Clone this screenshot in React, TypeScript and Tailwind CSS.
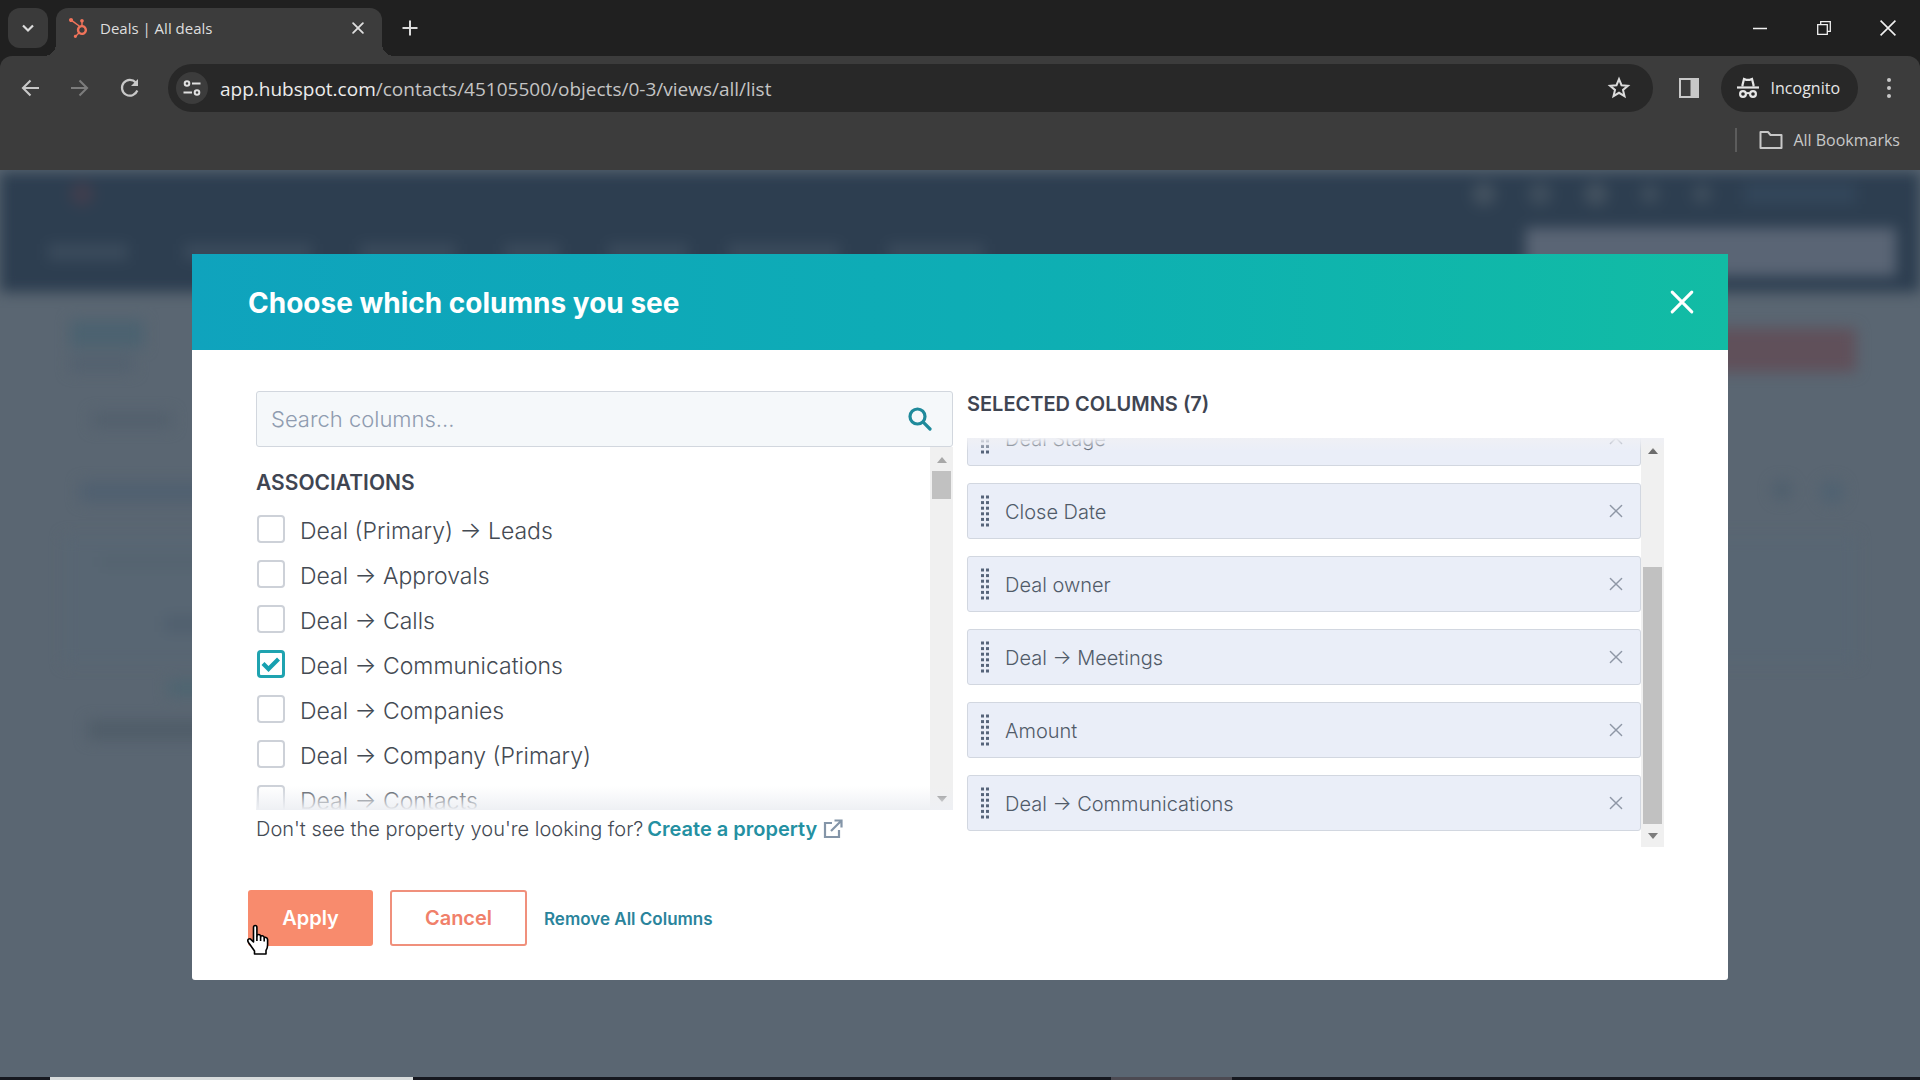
import { useState } from "react";
import { FaHubspot } from "react-icons/fa";

const ASSOCIATIONS = [
  "Deal (Primary) → Leads",
  "Deal → Approvals",
  "Deal → Calls",
  "Deal → Communications",
  "Deal → Companies",
  "Deal → Company (Primary)",
  "Deal → Contacts",
];

const SELECTED = [
  "Deal Stage",
  "Close Date",
  "Deal owner",
  "Deal → Meetings",
  "Amount",
  "Deal → Communications",
];

function Cross({ className, width }: { className: string; width: number }) {
  return (
    <svg viewBox="0 0 20 20" className={className} fill="none" stroke="currentColor" strokeWidth={width} strokeLinecap="round" aria-hidden="true">
      <path d="M3 3l14 14M17 3L3 17" />
    </svg>
  );
}

function TabStrip() {
  return (
    <div className="flex h-14 items-end bg-[#202020] pl-2">
      <button aria-label="Search tabs" className="mb-2 grid size-10 place-items-center rounded-xl bg-[#3a3a3a] text-[#dcdcdc]">
        <svg viewBox="0 0 12 12" className="size-3" fill="none" stroke="currentColor" strokeWidth="2.2" aria-hidden="true">
          <path d="M1 3.5l5 5 5-5" />
        </svg>
      </button>
      <div className="relative ml-2 flex h-12 w-[326px] items-center rounded-t-xl bg-[#3c3c3c] px-3 pb-2 text-[#dedede]">
        <span className="absolute bottom-0 -left-3 size-3 bg-[radial-gradient(circle_at_0_0,transparent_12px,#3c3c3c_12px)]" />
        <span className="absolute -right-3 bottom-0 size-3 bg-[radial-gradient(circle_at_100%_0,transparent_12px,#3c3c3c_12px)]" />
        <FaHubspot className="size-5 text-[#f0735a]" aria-hidden="true" />
        <span className="ml-3 flex-1 text-[15px] leading-5">Deals | All deals</span>
        <button aria-label="Close tab" className="grid size-6 place-items-center">
          <Cross className="size-3.5" width={2.6} />
        </button>
      </div>
      <button aria-label="New tab" className="mb-4 ml-4 grid size-6 place-items-center text-[#dcdcdc]">
        <svg viewBox="0 0 16 16" className="size-4" stroke="currentColor" strokeWidth="2" aria-hidden="true">
          <path d="M8 0.5v15M0.5 8h15" />
        </svg>
      </button>
      <div className="mb-3 ml-auto flex text-[#f0f0f0]">
        <button aria-label="Minimize" className="grid h-8 w-16 place-items-center">
          <svg viewBox="0 0 14 14" className="size-3.5" stroke="currentColor" strokeWidth="1.5" aria-hidden="true">
            <path d="M0 7.5h14" />
          </svg>
        </button>
        <button aria-label="Restore" className="grid h-8 w-16 place-items-center">
          <svg viewBox="0 0 14 14" className="size-3.5" fill="none" stroke="currentColor" strokeWidth="1.3" aria-hidden="true">
            <path d="M0.7 3.7h9.6v9.6h-9.6zM3.7 3.7v-3h9.6v9.6h-3" />
          </svg>
        </button>
        <button aria-label="Close window" className="grid h-8 w-16 place-items-center">
          <svg viewBox="0 0 14 14" className="size-4" stroke="currentColor" strokeWidth="1.4" aria-hidden="true">
            <path d="M0.5 0.5l13 13M13.5 0.5l-13 13" />
          </svg>
        </button>
      </div>
    </div>
  );
}

function Toolbar() {
  return (
    <div className="rounded-t-xl bg-[#3c3c3c] pt-2 text-[#c8c8c8]">
      <div className="flex h-12 items-center pl-3.5">
        <button aria-label="Back" className="grid size-8 place-items-center">
          <svg viewBox="0 0 18 18" className="size-[18px]" fill="none" stroke="currentColor" strokeWidth="2.1" aria-hidden="true">
            <path d="M18 9H2M9.5 1.500L2 9l7.500 7.500" />
          </svg>
        </button>
        <button aria-label="Forward" className="ml-[18px] grid size-8 place-items-center text-[#7c7c7c]">
          <svg viewBox="0 0 18 18" className="size-[18px]" fill="none" stroke="currentColor" strokeWidth="2.1" aria-hidden="true">
            <path d="M0 9h16M8.500 1.500L16 9l-7.500 7.500" />
          </svg>
        </button>
        <button aria-label="Reload" className="ml-[18px] grid size-8 place-items-center">
          <svg viewBox="0 0 20 20" className="size-5" fill="none" stroke="currentColor" strokeWidth="2.2" aria-hidden="true">
            <path d="M17.300 12.500A7.900 7.900 0 1 1 15.800 4.500" />
            <path d="M18 1v7h-7z" fill="currentColor" stroke="none" />
          </svg>
        </button>
        <div className="ml-[22px] flex h-12 flex-1 items-center rounded-full bg-[#282828] pr-5 pl-2">
          <button aria-label="View site information" className="grid size-8 place-items-center rounded-full bg-[#3c3c3c] text-[#e0e0e0]">
            <svg viewBox="0 0 18 18" className="size-[18px]" fill="none" stroke="currentColor" strokeWidth="2" aria-hidden="true">
              <circle cx="4" cy="4.500" r="2.300" />
              <path d="M9 4.500h8.500M0.500 13.500H9" />
              <circle cx="14" cy="13.500" r="2.300" />
            </svg>
          </button>
          <p className="ml-3 flex-1 pt-0.5 text-[19px] leading-6 text-[#c4c4c4]">
            <span className="text-[#ececec]">app.hubspot.com</span>/contacts/45105500/objects/0-3/views/all/list
          </p>
          <button aria-label="Bookmark this tab" className="grid size-7 place-items-center text-[#dcdcdc]">
            <svg viewBox="0 0 24 24" className="size-6" fill="none" stroke="currentColor" strokeWidth="2" aria-hidden="true">
              <path d="M12 3.200l2.500 6 6.400.5-4.900 4.200 1.500 6.300-5.500-3.400-5.500 3.400 1.500-6.300-4.900-4.200 6.400-.5z" />
            </svg>
          </button>
        </div>
        <button aria-label="Side panel" className="ml-5 grid size-8 place-items-center">
          <svg viewBox="0 0 20 20" className="size-5" aria-hidden="true">
            <path d="M1 1h18v18H1z" fill="none" stroke="currentColor" strokeWidth="2" />
            <path d="M11.500 1H19v18h-7.500z" fill="currentColor" />
          </svg>
        </button>
        <button className="ml-4 flex h-12 items-center gap-3 rounded-full bg-[#282828] pr-[18px] pl-4 text-[16px] leading-6 text-[#e6e6e6]">
          <svg viewBox="0 0 22 22" className="size-[22px]" fill="none" stroke="currentColor" strokeWidth="2.200" aria-hidden="true">
            <path d="M5.500 9.500V8l1.500-6 2.200.8h3.600L15 2l1.500 6v1.500" />
            <path d="M0 10.500h22" />
            <circle cx="6" cy="17" r="2.900" />
            <circle cx="16" cy="17" r="2.900" />
            <path d="M9 16.500q2-1 4 0" />
          </svg>
          Incognito
        </button>
        <button aria-label="Chrome menu" className="mr-[15px] ml-[15px] grid size-8 place-items-center">
          <svg viewBox="0 0 4 20" className="h-5 w-1" fill="currentColor" aria-hidden="true">
            <circle cx="2" cy="2" r="2" />
            <circle cx="2" cy="10" r="2" />
            <circle cx="2" cy="18" r="2" />
          </svg>
        </button>
      </div>
      <div className="flex h-[58px] items-center justify-end pr-5 pb-0.5">
        <span className="mr-[22px] h-6 w-0.5 bg-[#5c5c5c]" />
        <button className="flex items-center gap-2.5 text-[16px] leading-6">
          <svg viewBox="0 0 24 20" className="h-5 w-6" fill="none" stroke="currentColor" strokeWidth="2" strokeLinejoin="round" aria-hidden="true">
            <path d="M1.500 2h7.500l2.500 3h11v13h-21z" />
          </svg>
          All Bookmarks
        </button>
      </div>
    </div>
  );
}

function Backdrop() {
  return (
    <div className="absolute inset-0 overflow-hidden pt-0.5" aria-hidden="true">
      <div className="blur-[7px]">
        <div className="h-[120px] bg-[#2d3e50] pt-3">
          <div className="flex h-5 items-center gap-8 pr-16 pl-[70px]">
            <span className="mr-auto size-6 rounded-full bg-[#403e4e]" />
            <span className="size-6 rounded-full bg-[#43515f]" />
            <span className="size-6 rounded-full bg-[#3e4d5c]" />
            <span className="size-6 rounded-full bg-[#43515f]" />
            <span className="size-5 rounded-full bg-[#3e4d5c]" />
            <span className="size-5 rounded-full bg-[#3e4d5c]" />
            <span className="h-5 w-28 bg-[#33465a]" />
          </div>
          <div className="mt-6 flex h-12 items-center gap-10 pr-6 pl-12">
            <span className="h-4 w-20 bg-[#3b4b5c]" />
            <span className="ml-4 h-4 w-32 bg-[#3b4b5c]" />
            <span className="ml-2 h-4 w-24 bg-[#3b4b5c]" />
            <span className="ml-2 h-4 w-14 bg-[#3b4b5c]" />
            <span className="ml-2 h-4 w-20 bg-[#3b4b5c]" />
            <span className="h-4 w-28 bg-[#3b4b5c]" />
            <span className="ml-2 h-4 w-24 bg-[#3b4b5c]" />
            <span className="ml-auto h-12 w-[370px] bg-[#5a6575]" />
          </div>
        </div>
        <div className="flex items-start justify-between pt-7 pr-16 pl-[70px]">
          <div>
            <div className="h-7 w-[74px] bg-[#4c6270]" />
            <div className="mt-2 h-4 w-16 bg-[#53616f]" />
          </div>
          <div className="mt-2 h-11 w-[300px] rounded bg-[#60505a]" />
        </div>
        <div className="mt-10 ml-[92px] h-4 w-20 bg-[#53606d]" />
        <div className="mt-[52px] flex items-center justify-between pr-[76px] pl-20">
          <span className="h-5 w-[420px] bg-[#506070]" />
          <span className="flex gap-7">
            <span className="size-5 rounded-full bg-[#4f5f6d]" />
            <span className="size-6 rounded-full bg-[#506271]" />
          </span>
        </div>
        <div className="mx-16 mt-8 h-32 bg-[#586673] pt-5 pl-9">
          <div className="h-3 w-48 bg-[#54636f]" />
          <div className="mt-12 ml-16 h-4 w-48 bg-[#505f6e]" />
        </div>
        <div className="mt-4 ml-[168px] h-4 w-40 bg-[#4e6571]" />
        <div className="mt-6 ml-[88px] h-5 w-[800px] bg-[#505d69]" />
      </div>
    </div>
  );
}

function Scrollbar({ upClass, children }: { upClass: string; children: React.ReactNode }) {
  return (
    <div className="flex w-[23px] shrink-0 flex-col items-center bg-[#f0f0f0] pt-2.5 pb-2" aria-hidden="true">
      <svg viewBox="0 0 10 6" className={upClass} fill="currentColor">
        <path d="M5 0l5 6H0z" />
      </svg>
      {children}
      <svg viewBox="0 0 10 6" className="mt-auto h-1.5 w-2.5 text-[#7d7d7d]" fill="currentColor">
        <path d="M5 6l5-6H0z" />
      </svg>
    </div>
  );
}

function ColumnPicker() {
  const [checked, setChecked] = useState<string[]>(["Deal → Communications"]);
  const toggle = (name: string) =>
    setChecked((now) => (now.includes(name) ? now.filter((n) => n !== name) : [...now, name]));
  return (
    <section>
      <div className="flex h-14 items-center rounded-[3px] border border-[#d2d7de] bg-[#f5f8fa] pr-5 pl-3.5">
        <input
          type="text"
          aria-label="Search columns"
          placeholder="Search columns..."
          className="min-w-0 flex-1 bg-transparent text-[22px] leading-7 font-light text-[#33475b] outline-none placeholder:text-[#8f9cb0]"
        />
        <svg viewBox="0 0 24 24" className="size-6" fill="none" stroke="#1f8a9b" strokeWidth="3.200" strokeLinecap="round" aria-hidden="true">
          <circle cx="9.500" cy="9.500" r="7.500" />
          <path d="M15.200 15.200l6.800 6.800" />
        </svg>
      </div>
      <div className="relative flex h-[363px] overflow-hidden">
        <div className="flex-1">
          <h2 className="mt-6 text-[21px] leading-6 font-semibold text-[#3f4552]">ASSOCIATIONS</h2>
          <ul className="mt-[13px]">
            {ASSOCIATIONS.map((name) => (
              <li key={name}>
                <label className="flex h-[45px] items-center text-[23px] leading-7 font-light text-[#444a53]">
                  <span className="relative mr-[15px] mb-1 ml-px size-7">
                    <input
                      type="checkbox"
                      checked={checked.includes(name)}
                      onChange={() => toggle(name)}
                      className="peer block size-7 appearance-none rounded-[4px] border-2 border-[#cdd1d8] bg-white checked:border-[3px] checked:border-[#1fa3b0]"
                    />
                    <svg viewBox="0 0 28 28" className="pointer-events-none absolute inset-0 hidden size-7 peer-checked:block" fill="none" stroke="#16a0b0" strokeWidth="4.200" aria-hidden="true">
                      <path d="M6 13.500l5.500 5.500L21.500 9" />
                    </svg>
                  </span>
                  {name}
                </label>
              </li>
            ))}
          </ul>
        </div>
        <Scrollbar upClass="h-1.5 w-2.5 text-[#a8a8a8]">
          <div className="mt-2 h-7 w-[19px] bg-[#c1c1c1]" />
        </Scrollbar>
        <div className="pointer-events-none absolute bottom-0 left-0 h-6 w-full bg-gradient-to-b from-white/0 to-[#eef0f4]" />
      </div>
      <p className="mt-[5px] flex items-center text-[20px] leading-7 font-light text-[#444a53]">
        Don't see the property you're looking for?
        <a href="#create" className="ml-1 flex items-center gap-1.5 font-semibold text-[#2490a2]">
          Create a property
          <svg viewBox="0 0 20 20" className="size-5" fill="none" stroke="#8495a8" strokeWidth="2.200" aria-hidden="true">
            <path d="M9 4H2v14h14v-7M11.500 1.500h7v7M18 2L8 12" />
          </svg>
        </a>
      </p>
    </section>
  );
}

function Grip() {
  return (
    <svg viewBox="0 0 8 32" className="h-8 w-2" fill="#56647a" aria-hidden="true">
      {[0, 1, 2, 3, 4, 5].map((row) => (
        <g key={row}>
          <rect x="0" y={row * 5.6 + 0.5} width="3" height="3" />
          <rect x="5" y={row * 5.6 + 0.5} width="3" height="3" />
        </g>
      ))}
    </svg>
  );
}

function SelectedColumns() {
  return (
    <section>
      <h2 className="pt-px text-[20px] leading-6 font-semibold text-[#3f4552]">SELECTED COLUMNS (7)</h2>
      <div className="relative mt-[22px] flex h-[409px]">
        <ul className="flex flex-1 flex-col justify-end gap-[17px] overflow-hidden pb-4">
          {SELECTED.map((name) => (
            <li key={name} className="flex h-14 shrink-0 items-center rounded-[3px] border border-[#d2d7e0] bg-[#eaeef8] pr-3 pl-[13px]">
              <Grip />
              <span className="ml-4 flex-1 pt-0.5 text-[20px] leading-6 font-light text-[#515b69]">{name}</span>
              <button aria-label={"Remove " + name} className="grid size-6 place-items-center text-[#8f97a6]">
                <Cross className="size-4" width={1.8} />
              </button>
            </li>
          ))}
        </ul>
        <Scrollbar upClass="h-1.5 w-2.5 text-[#6c6c6c]">
          <div className="mt-[113px] h-[257px] w-[19px] bg-[#c1c1c1]" />
        </Scrollbar>
        <div className="pointer-events-none absolute inset-x-0 top-0 h-3 bg-gradient-to-b from-[#eff0f5] to-[#eff0f5]/10" />
      </div>
    </section>
  );
}

function Pointer() {
  return (
    <svg viewBox="0 0 24 32" className="pointer-events-none absolute top-[34px] -left-0.5 h-8 w-6" fill="#fff" stroke="#000" strokeWidth="1.600" strokeLinejoin="round" aria-hidden="true">
      <path d="M7.500 18V3.500q0-2 1.700-2t1.700 2V12q0-1.500 1.800-1.500t1.900 2v.5q.2-1.500 1.900-1.200t1.700 2v.6q.3-1.400 1.800-1t1.600 2.200v5.500q0 3-1.600 5.400V30H8.500v-3L2.500 18.500q-1.400-2.300 0-3.300t2.600.4z" />
      <path d="M10.900 12v5M14.600 13v4M18.200 14.500v3" fill="none" />
    </svg>
  );
}

export default function App() {
  return (
    <div className="flex min-h-screen flex-col bg-[#5a6672] font-['Open_Sans','Noto_Sans',sans-serif]">
      <header className="bg-[#202020]">
        <TabStrip />
        <Toolbar />
      </header>
      <main className="relative flex-1 px-[10%] pt-[84px] pb-24 font-['Inter','Noto_Sans',sans-serif]">
        <Backdrop />
        <div role="dialog" aria-labelledby="dialog-title" className="relative rounded-[3px] bg-white">
          <div className="flex h-24 items-center justify-between bg-gradient-to-r from-[#0fa3bd] via-[#0eadb5] to-[#12bca4] pr-8 pl-14 text-white">
            <h1 id="dialog-title" className="pt-0.5 text-[28px] leading-8 font-bold">Choose which columns you see</h1>
            <button aria-label="Close" className="grid size-7 place-items-center">
              <Cross className="size-7" width={2.2} />
            </button>
          </div>
          <div className="grid grid-cols-2 gap-3.5 px-16 pt-[41px]">
            <ColumnPicker />
            <SelectedColumns />
          </div>
          <div className="flex items-center pt-[43px] pb-[34px] pl-14 text-[20px] leading-6 font-semibold">
            <div className="relative">
              <button className="block h-14 w-[125px] rounded-[3px] bg-[#f88b6d] text-white">Apply</button>
              <Pointer />
            </div>
            <button className="ml-[17px] h-14 w-[137px] rounded-[3px] border-2 border-[#f0907c] bg-white text-[#f0806a]">Cancel</button>
            <button className="ml-[17px] pt-0.5 text-[17px] text-[#2a849c]">Remove All Columns</button>
          </div>
        </div>
      </main>
      <div className="flex h-[3px] bg-[#16181f] pl-[50px]" aria-hidden="true">
        <span className="w-[363px] bg-[#d8dcdc]" />
        <span className="ml-[698px] w-[121px] bg-[#4c4a52]" />
      </div>
    </div>
  );
}
